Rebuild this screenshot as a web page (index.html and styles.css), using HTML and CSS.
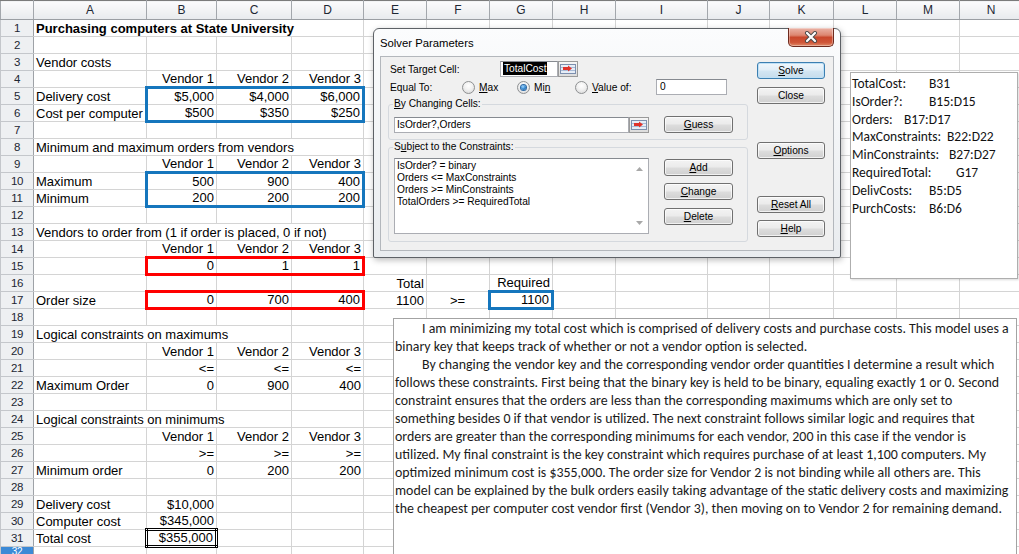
FILE: index.html
```html
<!DOCTYPE html>
<html>
<head>
<meta charset="utf-8">
<link rel="stylesheet" href="styles.css">
</head>
<body>
<table class="sheet">
<colgroup>
<col class="w-rh"><col class="w-a"><col class="w-b"><col class="w-c"><col class="w-d"><col class="w-e"><col class="w-f"><col class="w-g"><col class="w-h"><col class="w-i"><col class="w-j"><col class="w-k"><col class="w-l"><col class="w-m"><col class="w-n">
</colgroup>
<thead>
<tr><th class="corner"></th><th>A</th><th>B</th><th>C</th><th>D</th><th>E</th><th>F</th><th>G</th><th>H</th><th>I</th><th>J</th><th>K</th><th>L</th><th>M</th><th>N</th></tr>
</thead>
<tbody>
<tr><th>1</th><td colspan="4" class="bold">Purchasing computers at State University</td><td></td><td></td><td></td><td></td><td></td><td></td><td></td><td></td><td></td><td></td></tr>
<tr><th>2</th><td></td><td></td><td></td><td></td><td></td><td></td><td></td><td></td><td></td><td></td><td></td><td></td><td></td><td></td></tr>
<tr><th>3</th><td>Vendor costs</td><td></td><td></td><td></td><td></td><td></td><td></td><td></td><td></td><td></td><td></td><td></td><td></td><td></td></tr>
<tr><th>4</th><td></td><td class="r">Vendor 1</td><td class="r">Vendor 2</td><td class="r">Vendor 3</td><td></td><td></td><td></td><td></td><td></td><td></td><td></td><td></td><td></td><td></td></tr>
<tr><th>5</th><td>Delivery cost</td><td class="r blu bt bl">$5,000</td><td class="r blu bt">$4,000</td><td class="r blu bt br">$6,000</td><td></td><td></td><td></td><td></td><td></td><td></td><td></td><td></td><td></td><td></td></tr>
<tr><th>6</th><td>Cost per computer</td><td class="r blu bb bl">$500</td><td class="r blu bb">$350</td><td class="r blu bb br">$250</td><td></td><td></td><td></td><td></td><td></td><td></td><td></td><td></td><td></td><td></td></tr>
<tr><th>7</th><td></td><td></td><td></td><td></td><td></td><td></td><td></td><td></td><td></td><td></td><td></td><td></td><td></td><td></td></tr>
<tr><th>8</th><td colspan="4">Minimum and maximum orders from vendors</td><td></td><td></td><td></td><td></td><td></td><td></td><td></td><td></td><td></td><td></td></tr>
<tr><th>9</th><td></td><td class="r">Vendor 1</td><td class="r">Vendor 2</td><td class="r">Vendor 3</td><td></td><td></td><td></td><td></td><td></td><td></td><td></td><td></td><td></td><td></td></tr>
<tr><th>10</th><td>Maximum</td><td class="r blu bt bl">500</td><td class="r blu bt">900</td><td class="r blu bt br">400</td><td></td><td></td><td></td><td></td><td></td><td></td><td></td><td></td><td></td><td></td></tr>
<tr><th>11</th><td>Minimum</td><td class="r blu bb bl">200</td><td class="r blu bb">200</td><td class="r blu bb br">200</td><td></td><td></td><td></td><td></td><td></td><td></td><td></td><td></td><td></td><td></td></tr>
<tr><th>12</th><td></td><td></td><td></td><td></td><td></td><td></td><td></td><td></td><td></td><td></td><td></td><td></td><td></td><td></td></tr>
<tr><th>13</th><td colspan="4">Vendors to order from (1 if order is placed, 0 if not)</td><td></td><td></td><td></td><td></td><td></td><td></td><td></td><td></td><td></td><td></td></tr>
<tr><th>14</th><td></td><td class="r">Vendor 1</td><td class="r">Vendor 2</td><td class="r">Vendor 3</td><td></td><td></td><td></td><td></td><td></td><td></td><td></td><td></td><td></td><td></td></tr>
<tr><th>15</th><td></td><td class="r red bt bb bl">0</td><td class="r red bt bb">1</td><td class="r red bt bb br">1</td><td></td><td></td><td></td><td></td><td></td><td></td><td></td><td></td><td></td><td></td></tr>
<tr><th>16</th><td></td><td></td><td></td><td></td><td class="r">Total</td><td></td><td class="r">Required</td><td></td><td></td><td></td><td></td><td></td><td></td><td></td></tr>
<tr><th>17</th><td>Order size</td><td class="r red bt bb bl">0</td><td class="r red bt bb">700</td><td class="r red bt bb br">400</td><td class="r">1100</td><td class="c">&gt;=</td><td class="r blu bt bb bl br">1100</td><td></td><td></td><td></td><td></td><td></td><td></td><td></td></tr>
<tr><th>18</th><td></td><td></td><td></td><td></td><td></td><td></td><td></td><td></td><td></td><td></td><td></td><td></td><td></td><td></td></tr>
<tr><th>19</th><td colspan="3">Logical constraints on maximums</td><td></td><td></td><td></td><td></td><td></td><td></td><td></td><td></td><td></td><td></td><td></td></tr>
<tr><th>20</th><td></td><td class="r">Vendor 1</td><td class="r">Vendor 2</td><td class="r">Vendor 3</td><td></td><td></td><td></td><td></td><td></td><td></td><td></td><td></td><td></td><td></td></tr>
<tr><th>21</th><td></td><td class="r">&lt;=</td><td class="r">&lt;=</td><td class="r">&lt;=</td><td></td><td></td><td></td><td></td><td></td><td></td><td></td><td></td><td></td><td></td></tr>
<tr><th>22</th><td>Maximum Order</td><td class="r">0</td><td class="r">900</td><td class="r">400</td><td></td><td></td><td></td><td></td><td></td><td></td><td></td><td></td><td></td><td></td></tr>
<tr><th>23</th><td></td><td></td><td></td><td></td><td></td><td></td><td></td><td></td><td></td><td></td><td></td><td></td><td></td><td></td></tr>
<tr><th>24</th><td colspan="3">Logical constraints on minimums</td><td></td><td></td><td></td><td></td><td></td><td></td><td></td><td></td><td></td><td></td><td></td></tr>
<tr><th>25</th><td></td><td class="r">Vendor 1</td><td class="r">Vendor 2</td><td class="r">Vendor 3</td><td></td><td></td><td></td><td></td><td></td><td></td><td></td><td></td><td></td><td></td></tr>
<tr><th>26</th><td></td><td class="r">&gt;=</td><td class="r">&gt;=</td><td class="r">&gt;=</td><td></td><td></td><td></td><td></td><td></td><td></td><td></td><td></td><td></td><td></td></tr>
<tr><th>27</th><td>Minimum order</td><td class="r">0</td><td class="r">200</td><td class="r">200</td><td></td><td></td><td></td><td></td><td></td><td></td><td></td><td></td><td></td><td></td></tr>
<tr><th>28</th><td></td><td></td><td></td><td></td><td></td><td></td><td></td><td></td><td></td><td></td><td></td><td></td><td></td><td></td></tr>
<tr><th>29</th><td>Delivery cost</td><td class="r">$10,000</td><td></td><td></td><td></td><td></td><td></td><td></td><td></td><td></td><td></td><td></td><td></td><td></td></tr>
<tr><th>30</th><td>Computer cost</td><td class="r">$345,000</td><td></td><td></td><td></td><td></td><td></td><td></td><td></td><td></td><td></td><td></td><td></td><td></td></tr>
<tr><th>31</th><td>Total cost</td><td class="r dbl">$355,000</td><td></td><td></td><td></td><td></td><td></td><td></td><td></td><td></td><td></td><td></td><td></td><td></td></tr>
<tr><th class="sel">32</th><td></td><td></td><td></td><td></td><td></td><td></td><td></td><td></td><td></td><td></td><td></td><td></td><td></td><td></td></tr>
</tbody>
</table>

<div class="dlg">
  <div class="dlg-title">
    <span class="cap">Solver Parameters</span>
    <div class="xbtn"><svg width="14" height="12" viewBox="0 0 14 12"><path d="M3 2 L11 10 M11 2 L3 10" stroke="#4a4a4a" stroke-width="4" stroke-linecap="round"/><path d="M3 2 L11 10 M11 2 L3 10" stroke="#ffffff" stroke-width="2.2" stroke-linecap="round"/></svg></div>
  </div>
  <div class="dlg-body">
    <div class="dlg-left">
      <div class="row row-target">
        <span class="lbl lbl-target">Set Target Cell:</span>
        <div class="inp inp-target"><span class="hl">TotalCost</span></div>
        <div class="pick"><svg width="16" height="10" viewBox="0 0 16 10"><rect x="0.5" y="0.5" width="15" height="9" fill="#e6edf7" stroke="#7c8fae"/><path d="M1 3.5h14M1 6.5h14" stroke="#a9bbd6"/><path d="M3 3h5V1.5l4 3-4 3V6H3z" fill="#e0322b"/></svg></div>
      </div>
      <div class="row row-eq">
        <span class="lbl lbl-eq">Equal To:</span>
        <span class="radio w-max"><span class="rb"></span><span><u>M</u>ax</span></span>
        <span class="radio w-min"><span class="rb on"></span><span>Mi<u>n</u></span></span>
        <span class="radio w-val"><span class="rb"></span><span><u>V</u>alue of:</span></span>
        <div class="inp inp-val">0</div>
      </div>
      <fieldset class="grp g1">
        <legend><u>B</u>y Changing Cells:</legend>
        <div class="grp-row">
          <div class="inp inp-chg">IsOrder?,Orders</div>
          <div class="pick"><svg width="16" height="10" viewBox="0 0 16 10"><rect x="0.5" y="0.5" width="15" height="9" fill="#e6edf7" stroke="#7c8fae"/><path d="M1 3.5h14M1 6.5h14" stroke="#a9bbd6"/><path d="M3 3h5V1.5l4 3-4 3V6H3z" fill="#e0322b"/></svg></div>
          <div class="btn btn-l btn-guess"><span><u>G</u>uess</span></div>
        </div>
      </fieldset>
      <fieldset class="grp g2">
        <legend>S<u>u</u>bject to the Constraints:</legend>
        <div class="grp-row">
          <div class="list">
            <div class="list-items">
              <div>IsOrder? = binary</div>
              <div>Orders &lt;= MaxConstraints</div>
              <div>Orders &gt;= MinConstraints</div>
              <div>TotalOrders &gt;= RequiredTotal</div>
            </div>
            <div class="sbar">
              <svg width="7" height="4" viewBox="0 0 7 4"><path d="M0 4L3.5 0L7 4z" fill="#a8a8a8"/></svg>
              <svg width="7" height="4" viewBox="0 0 7 4"><path d="M0 0L3.5 4L7 0z" fill="#a8a8a8"/></svg>
            </div>
          </div>
          <div class="btncol">
            <div class="btn btn-l btn-add"><span><u>A</u>dd</span></div>
            <div class="btn btn-l btn-change"><span><u>C</u>hange</span></div>
            <div class="btn btn-l btn-delete"><span><u>D</u>elete</span></div>
          </div>
        </div>
      </fieldset>
    </div>
    <div class="dlg-right">
      <div class="btn btn-r def btn-solve"><span><u>S</u>olve</span></div>
      <div class="btn btn-r btn-close"><span>Close</span></div>
      <div class="btn btn-r btn-options"><span><u>O</u>ptions</span></div>
      <div class="btn btn-r btn-reset"><span><u>R</u>eset All</span></div>
      <div class="btn btn-r btn-help"><span><u>H</u>elp</span></div>
    </div>
  </div>
</div>

<div class="names">
  <div class="nm"><span class="k k77">TotalCost:</span>B31</div>
  <div class="nm"><span class="k k77">IsOrder?:</span>B15:D15</div>
  <div class="nm"><span class="k k52">Orders:</span>B17:D17</div>
  <div class="nm"><span class="k k95">MaxConstraints:</span>B22:D22</div>
  <div class="nm"><span class="k k97">MinConstraints:</span>B27:D27</div>
  <div class="nm"><span class="k k104">RequiredTotal:</span>G17</div>
  <div class="nm"><span class="k k77">DelivCosts:</span>B5:D5</div>
  <div class="nm"><span class="k k77">PurchCosts:</span>B6:D6</div>
</div>

<div class="note">
  <p>I am minimizing my total cost which is comprised of delivery costs and purchase costs. This model uses a<br>binary key that keeps track of whether or not a vendor option is selected.</p>
  <p>By changing the vendor key and the corresponding vendor order quantities I determine a result which<br>follows these constraints. First being that the binary key is held to be binary, equaling exactly 1 or 0. Second<br>constraint ensures that the orders are less than the corresponding maximums which are only set to<br>something besides 0 if that vendor is utilized. The next constraint follows similar logic and requires that<br>orders are greater than the corresponding minimums for each vendor, 200 in this case if the vendor is<br>utilized. My final constraint is the key constraint which requires purchase of at least 1,100 computers. My<br>optimized minimum cost is $355,000. The order size for Vendor 2 is not binding while all others are. This<br>model can be explained by the bulk orders easily taking advantage of the static delivery costs and maximizing<br>the cheapest per computer cost vendor first (Vendor 3), then moving on to Vendor 2 for remaining demand.</p>
</div>
</body>
</html>
```

FILE: styles.css
```css
* { box-sizing: border-box; }
html, body { margin: 0; padding: 0; background: #fff; }
body {
  width: 1019px;
  height: 554px;
  overflow: hidden;
  position: relative;
  font-family: "Liberation Sans", Arial, sans-serif;
}

/* ---------- spreadsheet grid ---------- */
.sheet {
  border-collapse: collapse;
  table-layout: fixed;
  width: 1022px;
  font-size: 13px;
  color: #000;
}
.w-rh { width: 33px; }
.w-a { width: 113px; }
.w-b { width: 70px; }
.w-c { width: 75px; }
.w-d { width: 72px; }
.w-e, .w-f, .w-g, .w-h { width: 63px; }
.w-i { width: 92px; }
.w-j { width: 62px; }
.w-k { width: 64px; }
.w-l, .w-m, .w-n { width: 63px; }

.sheet thead tr { height: 19px; }
.sheet tbody tr { height: 17px; }

.sheet thead th {
  padding: 0;
  font-weight: normal;
  font-size: 12px;
  color: #1d2733;
  background: linear-gradient(#fbfbfc, #e8eaed);
  border: 1px solid #a3a7ac;
  border-top-color: #7b7b7b;
  border-bottom-color: #9a9ea3;
  line-height: 17px;
}
.sheet tbody th {
  padding: 0;
  font-weight: normal;
  font-size: 11.5px;
  letter-spacing: -0.3px;
  color: #1d2733;
  background: #eef0f2;
  border: 1px solid #c4c7cb;
  border-right-color: #9ea2a7;
  line-height: 13px;
  text-align: center;
}
.sheet tbody th.sel {
  background: #3c8ad6;
  color: #fff;
  vertical-align: top;
  line-height: 9px;
  font-size: 10px;
}
.sheet td {
  border: 1px solid #d4d4d4;
  padding: 0 2px 1px 2px;
  white-space: nowrap;
  overflow: hidden;
  line-height: 13px;
  vertical-align: bottom;
}
.sheet td.r { text-align: right; }
.sheet td.c { text-align: center; }
.sheet td.bold { font-weight: bold; }

.blu { --bc: #1576bd; }
.red { --bc: #ff0000; }
.sheet td.bt { border-top: 3px solid var(--bc); }
.sheet td.bb { border-bottom: 3px solid var(--bc); }
.sheet td.bl { border-left: 3px solid var(--bc); }
.sheet td.br { border-right: 3px solid var(--bc); }
.sheet td.dbl { border: 3px double #000; }

/* ---------- Solver dialog ---------- */
.dlg {
  position: absolute;
  left: 373px;
  top: 28px;
  width: 468px;
  height: 230px;
  border: 1px solid #5d6166;
  border-radius: 6px 6px 2px 2px;
  background: linear-gradient(#fbfcfd, #e9ecef);
  box-shadow: 1px 2px 6px rgba(0, 0, 0, 0.28);
  display: flex;
  flex-direction: column;
  font-size: 10.2px;
  color: #000;
}
.dlg-title {
  height: 27px;
  display: flex;
  justify-content: space-between;
  align-items: flex-start;
  padding-left: 6px;
}
.cap {
  font-size: 11.3px;
  padding-top: 8px;
  color: #000;
}
.xbtn {
  width: 46px;
  height: 19px;
  margin-right: 6px;
  margin-top: -1px;
  border: 1px solid #6d2a1e;
  border-top: none;
  border-radius: 0 0 5px 5px;
  background: linear-gradient(#eab3a6 0%, #dd8670 40%, #c9472c 52%, #cf5638 80%, #e08a68 100%);
  display: flex;
  align-items: center;
  justify-content: center;
  box-shadow: inset 0 0 0 1px rgba(255, 255, 255, 0.35);
}
.dlg-body {
  flex: 1;
  margin: 0 6px 6px 6px;
  border: 1px solid #b3b7bc;
  background: #f0f0f0;
  display: flex;
  gap: 9px;
  padding: 4px 0 0 7px;
}
.dlg-left {
  width: 360px;
  display: flex;
  flex-direction: column;
}
.row {
  display: flex;
  align-items: center;
  height: 16px;
}
.lbl { padding-left: 2px; }
.lbl-target { width: 112px; }
.lbl-eq { width: 74px; }
.row-eq { margin-top: 2px; }

.inp {
  height: 16px;
  background: #fff;
  border: 1px solid #abadb3;
  border-top-color: #868a90;
  padding: 0 2px;
  line-height: 14px;
  white-space: nowrap;
}
.inp-target { width: 58px; }
.inp-val { width: 71px; padding-left: 3px; }
.inp-chg { width: 235px; }
.hl {
  background: #000;
  color: #fff;
  padding: 0 1px;
  display: inline-block;
  line-height: 13px;
}
.pick {
  width: 20px;
  height: 16px;
  border: 1px solid #9a9a9a;
  background: linear-gradient(#f6f6f6, #dcdcdc);
  display: flex;
  align-items: center;
  justify-content: center;
}

.radio {
  display: flex;
  align-items: center;
  gap: 4px;
}
.w-max { width: 55px; }
.w-min { width: 58px; }
.w-val { width: 81px; }
.rb {
  width: 13px;
  height: 13px;
  border-radius: 50%;
  border: 1px solid #8e9092;
  background: radial-gradient(circle at 50% 35%, #ffffff 0%, #f1f1f1 45%, #d3d3d3 100%);
  display: flex;
  align-items: center;
  justify-content: center;
}
.rb.on::after {
  content: "";
  width: 5px;
  height: 5px;
  border-radius: 50%;
  background: radial-gradient(circle at 40% 35%, #a5d8ff 0%, #3b8fd6 45%, #15508f 100%);
  box-shadow: 0 0 0 1px #2d6aa6;
}

.grp {
  margin: 0;
  border: 1px solid #d5d9de;
  border-radius: 3px;
  padding: 0 0 0 5px;
  min-width: 0;
}
.grp legend {
  padding: 0 1px;
  line-height: 12px;
  font-size: 10.2px;
  margin-left: -1px;
}
.g1 { margin-top: 3px; padding-top: 6px; padding-bottom: 6px; }
.g2 { margin-top: 1px; padding-top: 5px; padding-bottom: 7px; }
.grp-row {
  display: flex;
  align-items: flex-start;
}
.g1 .grp-row { align-items: center; height: 17px; }
.btn-guess { margin-left: 15px; }

.list {
  width: 255px;
  height: 76px;
  background: #fff;
  border: 1px solid #abadb3;
  border-top-color: #868a90;
  display: flex;
}
.list-items {
  flex: 1;
  padding: 1px 2px 0 2px;
  line-height: 12px;
  white-space: nowrap;
}
.sbar {
  width: 17px;
  display: flex;
  flex-direction: column;
  justify-content: space-between;
  align-items: center;
  padding: 8px 0 8px 0;
}
.btncol {
  margin-left: 15px;
  display: flex;
  flex-direction: column;
}
.btn-add { margin-top: 1px; }
.btn-change { margin-top: 7px; }
.btn-delete { margin-top: 8px; }

.btn {
  height: 17px;
  border: 1px solid #707070;
  border-radius: 3px;
  background: linear-gradient(#f3f3f3 0%, #ebebeb 48%, #dddddd 52%, #d0d0d0 100%);
  box-shadow: inset 0 0 0 1px rgba(255, 255, 255, 0.7);
  display: flex;
  align-items: center;
  justify-content: center;
  white-space: nowrap;
}
.btn-l { width: 69px; }
.btn-r { width: 68px; }
.btn.def {
  border-color: #3c7fb1;
  background: linear-gradient(#f0f7fc 0%, #e2eef7 48%, #d3e6f3 52%, #c6dceb 100%);
  box-shadow: inset 0 0 0 1px #bfe0f6;
}
.dlg-right {
  display: flex;
  flex-direction: column;
}
.btn-solve { margin-top: 1px; }
.btn-close { margin-top: 8px; }
.btn-options { margin-top: 38px; }
.btn-reset { margin-top: 37px; }
.btn-help { margin-top: 7px; }

/* ---------- range names comment ---------- */
.names {
  position: absolute;
  left: 850px;
  top: 72px;
  width: 168px;
  height: 207px;
  background: #fff;
  border: 1px solid #aeaeae;
  box-shadow: 1px 1px 2px rgba(0, 0, 0, 0.15);
  padding: 2px 0 0 1px;
  font-family: "Carlito", "Lato", sans-serif;
  font-size: 13.5px;
  color: #111;
}
.nm {
  height: 17.8px;
  line-height: 17.8px;
  white-space: nowrap;
}
.k { display: inline-block; }
.k52 { width: 52px; }
.k77 { width: 77px; }
.k95 { width: 95px; }
.k97 { width: 97px; }
.k104 { width: 104px; }

/* ---------- explanation text box ---------- */
.note {
  position: absolute;
  left: 393px;
  top: 318px;
  width: 624px;
  height: 240px;
  background: #fff;
  border: 1px solid #a3a3a3;
  padding: 1px 0 0 1px;
  font-family: "Carlito", "Lato", sans-serif;
  font-size: 13.9px;
  color: #1a1a1a;
}
.note p {
  margin: 0;
  text-indent: 27px;
  line-height: 18px;
  white-space: nowrap;
}
```
